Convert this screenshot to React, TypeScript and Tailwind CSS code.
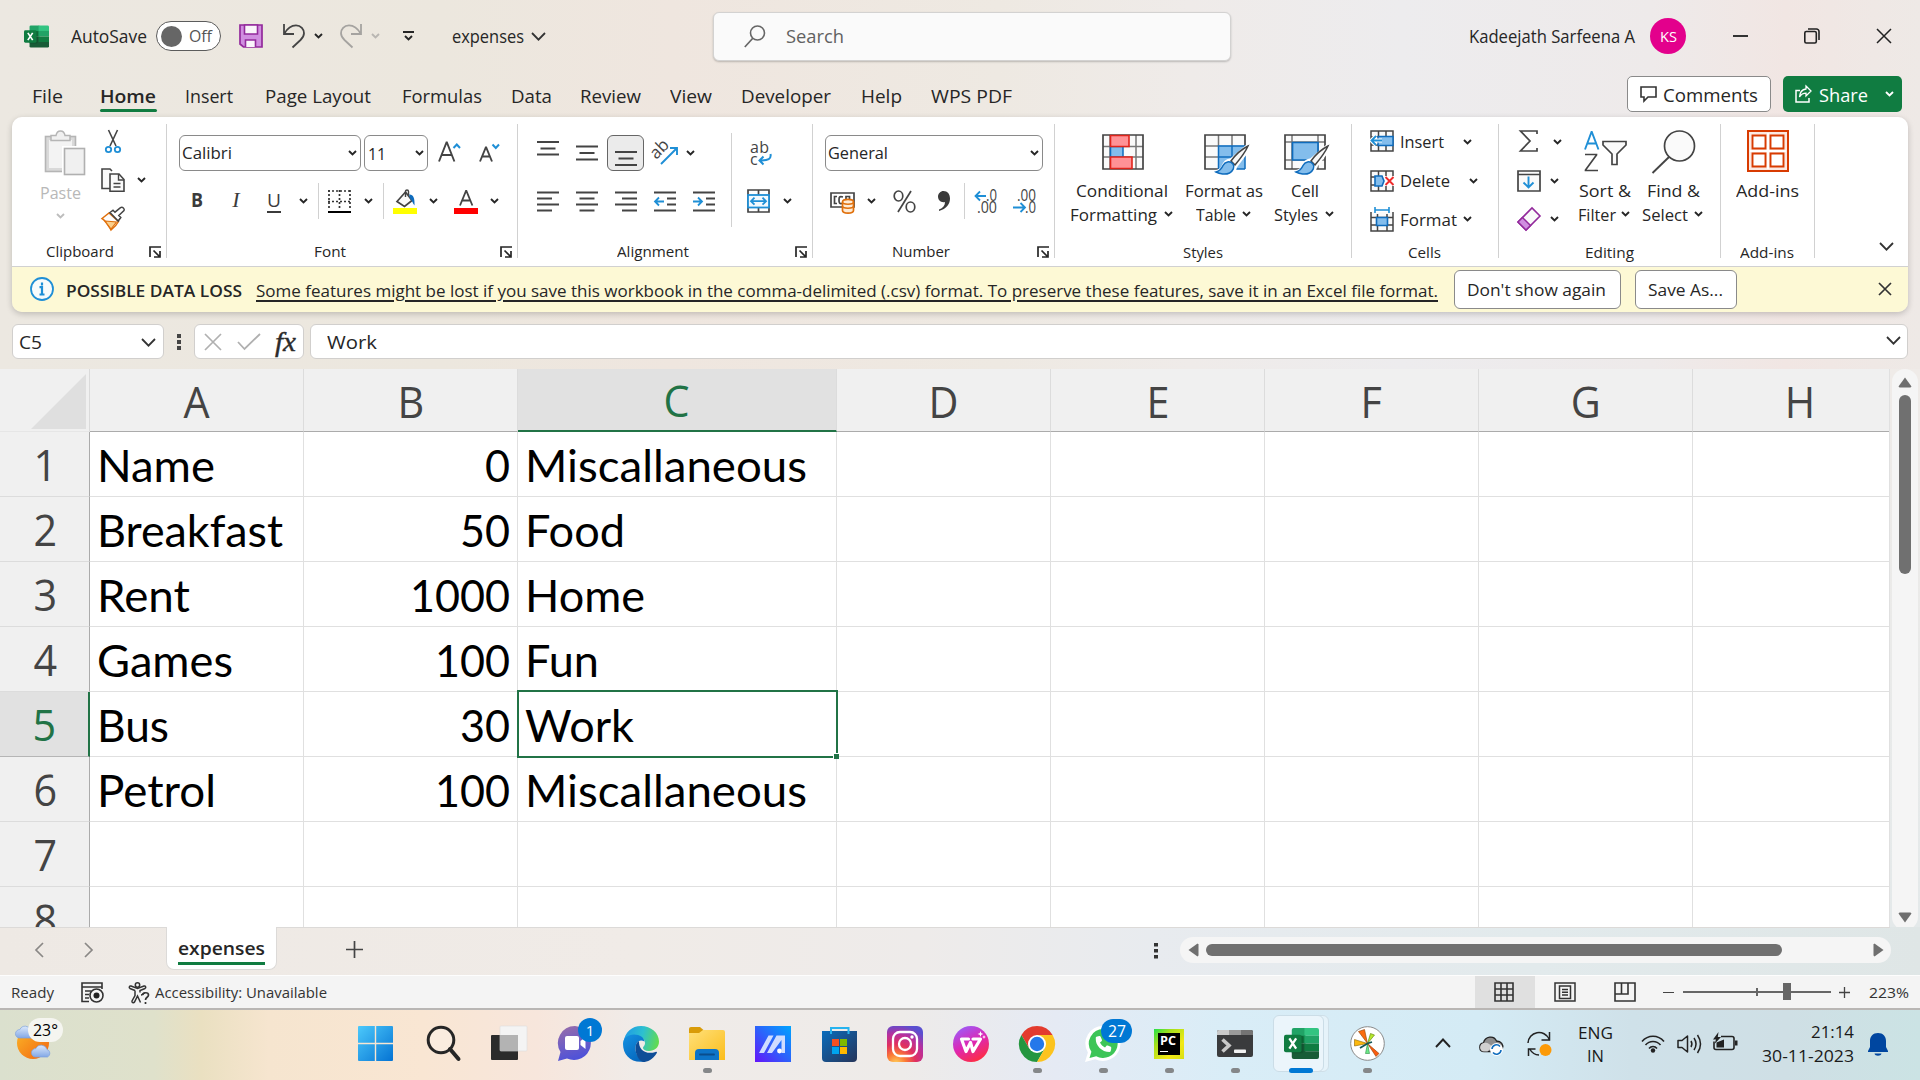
import { useLayoutEffect, useRef, useState, type ReactNode } from "react";
import { FaPhone } from "react-icons/fa6";

/** One line of text whose glyphs are condensed or widened to fill the box width. */
function Fit({ className = "", children }: { className?: string; children: ReactNode }) {
  const outer = useRef<HTMLSpanElement>(null);
  const inner = useRef<HTMLSpanElement>(null);
  const [scale, setScale] = useState(1);
  useLayoutEffect(() => {
    if (outer.current && inner.current && inner.current.offsetWidth > 0) {
      setScale(outer.current.clientWidth / inner.current.getBoundingClientRect().width);
    }
  }, []);
  return (
    <span ref={outer} className={"block shrink-0 whitespace-nowrap " + className}>
      <span ref={inner} className="inline-block origin-left" style={{ transform: `scaleX(${scale})` }}>
        {children}
      </span>
    </span>
  );
}

function Ic({ w, h, className = "", children }: { w: number; h: number; className?: string; children: ReactNode }) {
  return (
    <svg width={w} height={h} viewBox={`0 0 ${w} ${h}`} fill="none" className={"block shrink-0 overflow-visible " + className}>
      {children}
    </svg>
  );
}

function Chev({ className = "", color = "#262626" }: { className?: string; color?: string }) {
  return (
    <Ic w={9} h={6} className={className}>
      <path d="M1 1l3.5 3.5L8 1" stroke={color} strokeWidth="1.9" />
    </Ic>
  );
}

function BigChev({ className = "" }: { className?: string }) {
  return (
    <Ic w={15} h={9} className={className}>
      <path d="M1 1l6.5 6.7L14 1" stroke="#333" strokeWidth="1.8" />
    </Ic>
  );
}

function Launcher({ className = "" }: { className?: string }) {
  return (
    <Ic w={12} h={12} className={className}>
      <path d="M1 11V1h11M4.5 4.5l6 6M11 5v6H5" stroke="#262626" strokeWidth="1.7" />
    </Ic>
  );
}

const Divider = () => <div className="mt-[7px] h-[134px] w-px shrink-0 bg-[#d1d1d1]" />;

function ExcelLogo({ size }: { size: number }) {
  return (
    <svg width={size} height={size} viewBox="0 0 36 36" className="block shrink-0">
      <path d="M10 2h12v10H8V4a2 2 0 0 1 2-2z" fill="#21a366" />
      <path d="M21 2h13a2 2 0 0 1 2 2v6H21z" fill="#33c481" />
      <path d="M8 10h14v8H8z" fill="#107c41" />
      <path d="M21 10h15v8H21z" fill="#21a366" />
      <path d="M8 18h14v9H8z" fill="#185c37" />
      <path d="M21 18h15v8H21z" fill="#107c41" />
      <path d="M8 26h28v6a2 2 0 0 1-2 2H10a2 2 0 0 1-2-2z" fill="#185c37" />
      <path d="M8 10h10a2 2 0 0 1 2 2v14a2 2 0 0 1-2 2H8z" fill="#0b4a28" opacity=".45" />
      <rect x="0" y="9" width="18" height="18" rx="2" fill="#107c41" />
      <path d="M5.5 12.8l7 10.4M12.5 12.8l-7 10.4" stroke="#fff" strokeWidth="2.4" />
    </svg>
  );
}

function TitleBar() {
  return (
    <div className="flex h-[72px] items-center">
      <div className="ml-6">
        <ExcelLogo size={25} />
      </div>
      <Fit className="ml-[22px] w-[76px] text-[18px]">AutoSave</Fit>
      <div className="ml-[9px] flex h-[30px] w-[65px] shrink-0 items-center rounded-full border border-[#5c5c5c] bg-white">
        <div className="ml-1 size-[21px] shrink-0 rounded-full bg-[#666]" />
        <Fit className="ml-[7px] w-[23px] text-[16px] text-[#555]">Off</Fit>
      </div>
      <Ic w={24} h={24} className="ml-[18px]">
        <path d="M1 1h22v22H4.5L1 20z" fill="#d08ee0" stroke="#932a9c" strokeWidth="1.7" />
        <path d="M5.5 1h13v9h-13zM6.5 23v-7h10v7" fill="#faf5fb" stroke="#932a9c" strokeWidth="1.6" />
      </Ic>
      <Ic w={22} h={24} className="ml-5">
        <path d="M1 0v10h10M1.5 9.5C4 5 8 1.4 13 1.4c5 0 8 3.800 8 7.800 0 3-1.500 4.800-3.500 6.800L9.500 23.500" stroke="#444" strokeWidth="1.800" />
      </Ic>
      <Chev className="ml-[9px]" />
      <Ic w={22} h={24} className="ml-[17px]">
        <path d="M21 0v10H11M20.500 9.500C18 5 14 1.400 9 1.400c-5 0-8 3.800-8 7.800 0 3 1.500 4.800 3.500 6.800l8 7.500" stroke="#a5a3a0" strokeWidth="1.800" />
      </Ic>
      <Chev className="ml-[9px]" color="#b9b6b2" />
      <Ic w={11} h={10} className="ml-[23px]">
        <path d="M0 1h11M2 5l3.500 3.500L9 5" stroke="#262626" strokeWidth="1.900" />
      </Ic>
      <Fit className="ml-[38px] w-[72px] text-[18px]">expenses</Fit>
      <BigChev className="ml-[7px]" />
      <div className="ml-[167px] flex h-[49px] w-[518px] shrink-0 items-center rounded-[6px] border border-[#d3d2d1] bg-[#fafafa] shadow-[0_1px_2px_rgba(0,0,0,0.22)]">
        <Ic w={22} h={23} className="ml-[30px]">
          <circle cx="13.500" cy="8" r="7" stroke="#666" strokeWidth="1.600" />
          <path d="M8.800 13.200L0.800 22" stroke="#666" strokeWidth="1.700" />
        </Ic>
        <Fit className="ml-[20px] w-[58px] text-[19px] text-[#616161]">Search</Fit>
      </div>
      <Fit className="ml-[238px] w-[166px] text-[17.500px]">Kadeejath Sarfeena A</Fit>
      <div className="ml-[15px] flex size-[36px] shrink-0 items-center justify-center rounded-full bg-[#e3008c] text-white">
        <Fit className="w-[17px] text-[15px]">KS</Fit>
      </div>
      <div className="ml-[47px] h-[2px] w-[15px] bg-[#333]" />
      <Ic w={16} h={16} className="ml-[56px]">
        <rect x="0.800" y="3.500" width="11.500" height="11.500" rx="1.500" stroke="#222" strokeWidth="1.600" />
        <path d="M4 1h8.500a2.500 2.500 0 0 1 2.500 2.500V12" stroke="#222" strokeWidth="1.600" />
      </Ic>
      <Ic w={16} h={16} className="ml-[56px]">
        <path d="M1 1l14 14M15 1L1 15" stroke="#222" strokeWidth="1.500" />
      </Ic>
    </div>
  );
}

function TabRow() {
  return (
    <div className="flex h-[45px] items-center pt-[3px] text-[18.500px]">
      <Fit className="ml-8 w-[31px]">File</Fit>
      <div className="relative ml-[37px] flex h-[45px] items-center">
        <Fit className="w-[56px] font-semibold">Home</Fit>
        <div className="absolute bottom-[7px] left-0 h-[3px] w-[57px] rounded-full bg-[#107c41]" />
      </div>
      <Fit className="ml-[29px] w-[48px]">Insert</Fit>
      <Fit className="ml-[32px] w-[106px]">Page Layout</Fit>
      <Fit className="ml-[31px] w-[80px]">Formulas</Fit>
      <Fit className="ml-[29px] w-[41px]">Data</Fit>
      <Fit className="ml-[28px] w-[61px]">Review</Fit>
      <Fit className="ml-[29px] w-[42px]">View</Fit>
      <Fit className="ml-[29px] w-[90px]">Developer</Fit>
      <Fit className="ml-[30px] w-[41px]">Help</Fit>
      <Fit className="ml-[29px] w-[81px]">WPS PDF</Fit>
      <div className="ml-[615px] mt-[-4px] flex h-[36px] w-[144px] shrink-0 items-center rounded-[5px] border border-[#8a8a8a] bg-white">
        <Ic w={17} h={16} className="ml-[12px]">
          <path d="M1 1h15v10H8l-4 4v-4H1z" stroke="#333" strokeWidth="1.600" />
        </Ic>
        <Fit className="ml-[6px] mt-px w-[95px]">Comments</Fit>
      </div>
      <div className="ml-[12px] mt-[-4px] flex h-[36px] w-[119px] shrink-0 items-center rounded-[5px] bg-[#107c41] text-white">
        <Ic w={17} h={18} className="ml-[12px]">
          <path d="M5 5.500H1V17h13v-4" stroke="#fff" strokeWidth="1.500" />
          <path d="M11 1l5 5-5 5V8.200C8 8.200 6 9.500 4.500 12c.3-4.500 2.500-7.500 6.500-8z" stroke="#fff" strokeWidth="1.300" />
        </Ic>
        <Fit className="ml-[7px] mt-px w-[49px]">Share</Fit>
        <Chev className="ml-[17px]" color="#fff" />
      </div>
    </div>
  );
}

function ClipboardGroup() {
  return (
    <div className="w-[154px] shrink-0">
      <div className="flex h-[117px]">
        <div className="ml-[23px] flex w-[50px] flex-col items-center pt-[13px]">
          <Ic w={41} h={45} className="ml-[8px]">
            <rect x="1.500" y="6.500" width="30" height="35" fill="#d9d9d9" stroke="#b5b5b5" strokeWidth="1.600" />
            <rect x="5" y="10" width="23" height="28" fill="#f3f3f3" />
            <path d="M7 10.500V5.500h5C12.500 2.500 14 1 16.500 1s4 1.500 4.500 4.500h5v5z" fill="#f0f0f0" stroke="#b5b5b5" strokeWidth="1.500" />
            <rect x="18" y="16" width="24" height="29" fill="#fff" />
            <rect x="20.500" y="18.500" width="20" height="26" fill="#f0f0f0" stroke="#b0b0b0" strokeWidth="1.600" />
          </Ic>
          <Fit className="mt-[8px] h-5 w-[41px] text-[16.500px] leading-5 text-[#b8b8b8]">Paste</Fit>
          <Chev className="mt-[10px]" color="#bdbdbd" />
        </div>
        <div className="ml-[16px] flex flex-col gap-[15px] pt-[12px]">
          <Ic w={24} h={24}>
            <path d="M7.500 1l7.500 16M16.500 1L9 17" stroke="#444" strokeWidth="1.600" />
            <circle cx="7.500" cy="20.500" r="2.700" stroke="#1f8fd6" strokeWidth="1.800" />
            <circle cx="16.500" cy="20.500" r="2.700" stroke="#1f8fd6" strokeWidth="1.800" />
          </Ic>
          <div className="flex items-center">
            <Ic w={24} h={24}>
              <path d="M9 20.500H1V1h8l2 2" stroke="#444" strokeWidth="1.600" fill="#fafafa" />
              <path d="M9 6h9l5 5.500V23.200H9z" fill="#fafafa" stroke="#444" strokeWidth="1.600" />
              <path d="M17.500 6v6H23M12.500 15.500h7M12.500 19h7" stroke="#444" strokeWidth="1.400" />
            </Ic>
            <Chev className="ml-[12px]" />
          </div>
          <Ic w={24} h={24}>
            <path d="M1 11.500L8 6l9.500 8.500c-2 4-4.500 6-7.500 8.500C7 18 5 14 1 11.500z" fill="#fdfdfd" stroke="#e0700c" strokeWidth="1.500" />
            <path d="M4 14l11.500 1-5.500 7z" fill="#fbd08d" stroke="#e0700c" strokeWidth="1.100" />
            <path d="M9 5.500l3-2.300 2 2 5.500-4.500c2-1.200 4.500 1 3.500 2.900l-5.200 4.900 2 2-2.600 3.500z" fill="#fff" stroke="#444" strokeWidth="1.500" />
          </Ic>
        </div>
      </div>
      <div className="flex h-[35px] items-center">
        <Fit className="ml-[34px] w-[68px] text-[15px]">Clipboard</Fit>
        <Launcher className="ml-[35px]" />
      </div>
    </div>
  );
}

function FontGroup() {
  return (
    <div className="w-[350px] shrink-0">
      <div className="h-[117px] pt-[18px]">
        <div className="flex h-[36px] items-center">
          <div className="ml-[12px] flex h-[36px] w-[182px] items-center rounded-[6px] border border-[#8a8a8a]">
            <Fit className="ml-[2px] mt-px w-[50px] text-[16.500px]">Calibri</Fit>
            <Chev className="ml-[116px]" />
          </div>
          <div className="ml-[3px] flex h-[36px] w-[64px] items-center rounded-[6px] border border-[#8a8a8a]">
            <Fit className="ml-[3px] mt-px w-[18px] text-[17px]">11</Fit>
            <Chev className="ml-[29px]" />
          </div>
          <Ic w={23} h={24} className="-mt-[3px] ml-[10px]">
            <path d="M1 21.500L8.500 2.500h.4l7.500 19M3.800 15h9.800" stroke="#444" strokeWidth="1.900" />
            <path d="M15.500 8l3.300-3.500L22 8" stroke="#1f8fd6" strokeWidth="2" />
          </Ic>
          <Ic w={21} h={24} className="-mt-[3px] ml-[18px]">
            <path d="M1 21.500L6.800 7.500h.4l5.800 14M3.200 16.500h7.600" stroke="#444" strokeWidth="1.900" />
            <path d="M13.500 4.500l3.300 3.500L20 4.500" stroke="#1f8fd6" strokeWidth="2" />
          </Ic>
        </div>
        <div className="mt-[12px] flex h-[36px] items-center text-[#3b3b3b]">
          <Fit className="-mt-px ml-[24px] w-[12px] text-[19px] font-bold">B</Fit>
          <span className="-mt-[3px] ml-[26px] w-[14px] shrink-0 text-center font-['Liberation_Serif'] text-[22px] italic">I</span>
          <div className="ml-[24px] flex w-[14px] flex-col items-center">
            <Fit className="h-[22px] w-[14px] text-[18px] leading-[22px]">U</Fit>
            <div className="h-[2px] w-[14px] bg-[#3b3b3b]" />
          </div>
          <Chev className="ml-[18px]" />
          <div className="ml-[10px] h-[36px] w-px bg-[#d1d1d1]" />
          <Ic w={23} h={23} className="ml-[9px]">
            <path d="M0 1h23M0 11.500h23" stroke="#333" strokeWidth="1.700" strokeDasharray="2 2" />
            <path d="M1 0v20M11.500 0v20M22 0v20" stroke="#333" strokeWidth="1.700" strokeDasharray="2 2" />
            <path d="M0 22h23" stroke="#000" strokeWidth="2" />
          </Ic>
          <Chev className="ml-[13px]" />
          <div className="ml-[10px] h-[36px] w-px bg-[#d1d1d1]" />
          <Ic w={24} h={25} className="ml-[9px]">
            <path d="M4 12.500L12.500 3l6.500 8.500-7.500 6z" stroke="#444" strokeWidth="1.700" fill="#fafafa" />
            <path d="M12.500 8V2.500c0-2 3-2 3 0V6" stroke="#444" strokeWidth="1.400" />
            <path d="M16 5.500c4-.5 6 3 5.500 11-2-2-2-5-4.500-7z" fill="#0f6cbd" />
            <path d="M0 19h24v6H0z" fill="#ff0" />
          </Ic>
          <Chev className="ml-[12px]" />
          <Ic w={24} h={25} className="ml-[16px]">
            <path d="M6 16.500L12 2h.4l6 14.500M8 11.500h8.200" stroke="#444" strokeWidth="1.800" />
            <path d="M0 19h24v6H0z" fill="#f00" />
          </Ic>
          <Chev className="ml-[12px]" />
        </div>
      </div>
      <div className="flex h-[35px] items-center">
        <Fit className="ml-[147px] w-[32px] text-[15px]">Font</Fit>
        <Launcher className="ml-[154px]" />
      </div>
    </div>
  );
}

function Lines({ d, className = "" }: { d: string; className?: string }) {
  return (
    <Ic w={22} h={21} className={className}>
      <path d={d} stroke="#444" strokeWidth="1.800" />
    </Ic>
  );
}

function AlignmentGroup() {
  return (
    <div className="w-[294px] shrink-0">
      <div className="flex h-[117px]">
        <div className="w-[213px] pt-[18px]">
          <div className="flex h-[36px] items-center">
            <Lines className="ml-[19px]" d="M0 -1h22M3.500 5.500h15M0 11.500h22" />
            <Lines className="ml-[17px]" d="M0 3.500h22M3.500 10h15M0 16.500h22" />
            <div className="ml-[9px] flex h-[36px] w-[37px] items-center justify-center rounded-[6px] border border-[#666] bg-[#ebebeb]">
              <Lines d="M0 9h22M3.500 15.500h15M0 22h22" />
            </div>
            <Ic w={25} h={25} className="-mt-px ml-[9px]">
              <text x="-3" y="15" transform="rotate(-45 6 10)" fontSize="17" fill="#444">ab</text>
              <path d="M8 24L24 8M17 8h7v7" stroke="#1f8fd6" strokeWidth="1.900" />
            </Ic>
            <Chev className="ml-[8px]" />
          </div>
          <div className="mt-[12px] flex h-[36px] items-center gap-[17px] pl-[19px]">
            <Lines d="M0 1.500h22M0 7.500h15M0 13.500h22M0 19.500h15" />
            <Lines d="M0 1.500h22M3.500 7.500h15M0 13.500h22M3.500 19.500h15" />
            <Lines d="M0 1.500h22M7 7.500h15M0 13.500h22M7 19.500h15" />
            <Ic w={22} h={21}>
              <path d="M0 1.500h22M13 7.500h9M13 13.500h9M0 19.500h22" stroke="#444" strokeWidth="1.800" />
              <path d="M10 10.500H1.500M5 6.500l-4 4 4 4" stroke="#1f8fd6" strokeWidth="1.800" />
            </Ic>
            <Ic w={22} h={21}>
              <path d="M0 1.500h22M13 7.500h9M13 13.500h9M0 19.500h22" stroke="#444" strokeWidth="1.800" />
              <path d="M0 10.500h8.500M5 6.500l4 4-4 4" stroke="#1f8fd6" strokeWidth="1.800" />
            </Ic>
          </div>
        </div>
        <div className="mt-[16px] h-[94px] w-px bg-[#d1d1d1]" />
        <div className="pt-[18px]">
          <div className="flex h-[36px] items-center">
            <Ic w={22} h={25} className="ml-[18px]">
              <text x="0" y="12" fontSize="16" fill="#444" textLength="19">ab</text>
              <text x="0" y="24" fontSize="16" fill="#444">c</text>
              <path d="M20.500 13c1 5-2 6.500-11 6.500M13.500 15.500l-4 4 4 4" stroke="#1f8fd6" strokeWidth="2" />
            </Ic>
          </div>
          <div className="mt-[12px] flex h-[36px] items-center">
            <Ic w={23} h={24} className="ml-[15px]">
              <path d="M1 1h21v22H1zM11.500 1v5M11.500 18v5" stroke="#444" strokeWidth="1.700" />
              <rect x="1" y="6" width="21" height="12.500" fill="#f2f9fe" stroke="#1f8fd6" strokeWidth="1.800" />
              <path d="M4 12.200h15M7.500 8.700L4 12.200l3.500 3.500M15.500 8.700l3.500 3.500-3.500 3.500" stroke="#1f8fd6" strokeWidth="1.800" />
            </Ic>
            <Chev className="ml-[13px]" />
          </div>
        </div>
      </div>
      <div className="flex h-[35px] items-center">
        <Fit className="ml-[99px] w-[72px] text-[15px]">Alignment</Fit>
        <Launcher className="ml-[106px]" />
      </div>
    </div>
  );
}

function NumberGroup() {
  return (
    <div className="w-[241px] shrink-0">
      <div className="h-[117px] pt-[18px]">
        <div className="ml-[12px] flex h-[36px] w-[218px] items-center rounded-[6px] border border-[#8a8a8a]">
          <Fit className="ml-[2px] mt-px w-[60px] text-[16.500px]">General</Fit>
          <Chev className="ml-[142px]" />
        </div>
        <div className="mt-[12px] flex h-[36px] items-center">
          <Ic w={25} h={22} className="ml-[17px] mt-[3px]">
            <path d="M1 1h23v14H1z" stroke="#444" strokeWidth="1.700" />
            <path d="M7 4.500H4.500v7H7M13 5c-3.500-1-4 0-4 3s.5 4 3 3.500M19.500 7V4.500H16V8" stroke="#444" strokeWidth="1.700" />
            <path d="M12.500 10c0-3.500 11-3.500 11 0v8.500c0 3.500-11 3.500-11 0z" fill="#fdebd6" stroke="#e0700c" strokeWidth="1.700" />
            <path d="M12.500 10c0 3 11 3 11 0M12.500 14c0 3 11 3 11 0" stroke="#e0700c" strokeWidth="1.600" />
          </Ic>
          <Chev className="ml-[12px]" />
          <Ic w={23} h={23} className="ml-[17px]">
            <path d="M18 1L5 22" stroke="#444" strokeWidth="1.700" />
            <ellipse cx="5.500" cy="6" rx="4.300" ry="5" stroke="#444" strokeWidth="1.700" />
            <ellipse cx="17.500" cy="17" rx="4.300" ry="5" stroke="#444" strokeWidth="1.700" />
          </Ic>
          <Ic w={12} h={20} className="ml-[22px]">
            <path d="M5.500 0C9.500 0 12 3 12 7.500 12 13 8.500 18 1 20v-1.500c4-1.500 6-4 6-7.500-4 1-7-2-7-5.500C0 2.500 2.500 0 5.500 0z" fill="#3b3b3b" />
          </Ic>
          <div className="ml-[14px] h-[36px] w-px bg-[#d1d1d1]" />
          <Ic w={23} h={24} className="-mt-px ml-[9px]">
            <text x="12" y="11.500" fontSize="15.500" fill="#444" textLength="11" lengthAdjust="spacingAndGlyphs">.0</text>
            <text x="3" y="23.500" fontSize="15.500" fill="#444" textLength="20" lengthAdjust="spacingAndGlyphs">.00</text>
            <path d="M12 7H1.500M6 2.500L1.500 7 6 11.500" stroke="#1f8fd6" strokeWidth="1.800" />
          </Ic>
          <Ic w={23} h={24} className="-mt-px ml-[16px]">
            <text x="4" y="11.500" fontSize="15.500" fill="#444" textLength="19" lengthAdjust="spacingAndGlyphs">.00</text>
            <text x="12" y="23.500" fontSize="15.500" fill="#444" textLength="11" lengthAdjust="spacingAndGlyphs">.0</text>
            <path d="M0 18.500h11.500M7.500 14l4.500 4.500L7.500 23" stroke="#1f8fd6" strokeWidth="1.800" />
          </Ic>
        </div>
      </div>
      <div className="flex h-[35px] items-center">
        <Fit className="ml-[79px] w-[58px] text-[15px]">Number</Fit>
        <Launcher className="ml-[87px]" />
      </div>
    </div>
  );
}

function Brush() {
  return (
    <g>
      <path d="M44 11.500L27 26c-5 1-6 2-8 7-1 3-4 4-7 5 8 4.500 18 2.500 19.500-5.500L46 13z" fill="#fff" stroke="#fff" strokeWidth="3.500" />
      <path d="M44 12c-6 3-12 8-17 15l4 4c5-6 10-12 13-19z" fill="#f7f7f7" stroke="#444" strokeWidth="1.500" />
      <path d="M12 38c4-1 5.500-3 7-6.500 2-4 7-5 10-1.500 2 3 0 7-3.500 9-4 2-10 1-13.500-1z" fill="#83bdec" stroke="#0f6cbd" strokeWidth="1.500" />
    </g>
  );
}

function StylesGroup() {
  return (
    <div className="w-[296px] shrink-0 text-[17px]">
      <div className="flex h-[117px] pt-[17px]">
        <div className="ml-[15px] w-[103px]">
          <Ic w={42} h={42} className="ml-[32px]">
            <path d="M1 1h40v34H1z" fill="#fafafa" />
            <path d="M8 1v34M34 1v34M1 12.500h40M1 23h40" stroke="#777" strokeWidth="1.500" />
            <path d="M1 1h40v34H1z" stroke="#444" strokeWidth="1.700" />
            <path d="M8.500 12.500H21V23H8.500z" fill="#83bdec" stroke="#0f6cbd" strokeWidth="1.500" />
            <path d="M8.500 1.500H27v11H8.500zM8.500 23H30v11.500H8.500z" fill="#ff9296" stroke="#e0241b" strokeWidth="1.600" />
          </Ic>
          <Fit className="ml-[6px] mt-[3px] h-6 w-[92px] leading-6">Conditional</Fit>
          <div className="flex h-6 items-center">
            <Fit className="w-[87px] leading-6">Formatting</Fit>
            <Chev className="ml-[7px] mt-[-3px]" />
          </div>
        </div>
        <div className="ml-[12px] w-[80px]">
          <Ic w={45} h={42} className="ml-[19px]">
            <path d="M1 1h40v34H1z" fill="#fafafa" />
            <path d="M14.500 11.500H41V35H14.500z" fill="#83bdec" />
            <path d="M1 12h13.500M1 23h13.500M14.500 1v11M28 1v11" stroke="#777" strokeWidth="1.500" />
            <path d="M41 12V1H1v34h13" stroke="#444" strokeWidth="1.700" />
            <path d="M14.500 35V12H41v23M28 12v23M14.500 23H41M28 35h13" stroke="#0f6cbd" strokeWidth="1.500" />
            <Brush />
          </Ic>
          <Fit className="mt-[3px] h-6 w-[78px] leading-6">Format as</Fit>
          <div className="flex h-6 items-center">
            <Fit className="ml-[11px] w-[40px] leading-6">Table</Fit>
            <Chev className="ml-[6px] mt-[-3px]" />
          </div>
        </div>
        <div className="ml-[9px] w-[62px]">
          <Ic w={45} h={42} className="ml-[10px]">
            <path d="M1 1h40v34H1z" fill="#fafafa" />
            <path d="M8 1v34M34 1v34M1 8h40M1 26h40" stroke="#777" strokeWidth="1.500" />
            <path d="M1 1h40v34H1z" stroke="#444" strokeWidth="1.700" />
            <path d="M8.500 8.500H34V26H8.500z" fill="#83bdec" stroke="#0f6cbd" strokeWidth="1.700" />
            <Brush />
          </Ic>
          <Fit className="ml-[17px] mt-[3px] h-6 w-[28px] leading-6">Cell</Fit>
          <div className="flex h-6 items-center">
            <Fit className="w-[44px] leading-6">Styles</Fit>
            <Chev className="ml-[7px] mt-[-3px]" />
          </div>
        </div>
      </div>
      <div className="flex h-[36px] items-center">
        <Fit className="ml-[128px] w-[40px] text-[15px]">Styles</Fit>
      </div>
    </div>
  );
}

function CellsGroup() {
  return (
    <div className="w-[146px] shrink-0 text-[16.500px]">
      <div className="h-[117px] pl-[18px] pt-[5px]">
        <div className="flex h-[39px] items-center">
          <Ic w={24} h={22} className="-mt-px">
            <path d="M1 1h22v20H1zM1 7h22M1 15h22M8.500 1v20M16 1v20" stroke="#444" strokeWidth="1.500" fill="#fafafa" />
            <path d="M8 6.500h15v9H8z" fill="#83bdec" stroke="#0f6cbd" strokeWidth="1.500" />
            <path d="M12 10.500H1.500M6 6l-4.500 4.500L6 15" stroke="#fff" strokeWidth="4" />
            <path d="M12 10.500H1.500M6 6l-4.500 4.500L6 15" stroke="#1f8fd6" strokeWidth="1.800" />
          </Ic>
          <Fit className="ml-[6px] mt-px w-[44px]">Insert</Fit>
          <Chev className="ml-[19px]" />
        </div>
        <div className="flex h-[39px] items-center">
          <Ic w={24} h={22}>
            <path d="M1 1h22v20H1zM1 7h22M1 15h22M8.500 1v20M16 1v20" stroke="#444" strokeWidth="1.500" fill="#fafafa" />
            <path d="M13 6h11v10H13z" fill="#fff" />
            <path d="M5 6h7l2 5-2 5H5z" fill="#83bdec" stroke="#0f6cbd" strokeWidth="1.600" />
            <path d="M15.500 7l8 8M23.500 7l-8 8" stroke="#ee2c2c" strokeWidth="1.900" />
          </Ic>
          <Fit className="ml-[6px] mt-px w-[50px]">Delete</Fit>
          <Chev className="ml-[19px]" />
        </div>
        <div className="flex h-[39px] items-center">
          <Ic w={24} h={24}>
            <path d="M1 4v19h22V4M1 9.500h22M1 17h22M7.500 6v17M17 6v17" stroke="#444" strokeWidth="1.500" fill="#fafafa" />
            <path d="M6.500 9.500h11v8h-11z" fill="#83bdec" stroke="#0f6cbd" strokeWidth="1.600" />
            <path d="M5 2h14M5 -1v6M19 -1v6" stroke="#1f8fd6" strokeWidth="1.600" />
          </Ic>
          <Fit className="ml-[6px] mt-px w-[57px]">Format</Fit>
          <Chev className="-mt-[2px] ml-[6px]" />
        </div>
      </div>
      <div className="flex h-[36px] items-center">
        <Fit className="ml-[56px] w-[33px] text-[15px]">Cells</Fit>
      </div>
    </div>
  );
}

function EditingGroup() {
  return (
    <div className="w-[221px] shrink-0 text-[17px]">
      <div className="flex h-[117px]">
        <div className="ml-[18px] w-[47px] pt-[5px]">
          <div className="flex h-[39px] items-center">
            <Ic w={19} h={22} className="-mt-px ml-[2px]">
              <path d="M18 4V1H1.500l9.500 10-9.500 10H18v-3" stroke="#444" strokeWidth="1.700" />
            </Ic>
            <Chev className="ml-[15px]" />
          </div>
          <div className="flex h-[39px] items-center">
            <Ic w={24} h={22}>
              <path d="M1 1h22v20H1zM1 4.500h22" stroke="#444" strokeWidth="1.700" fill="#fafafa" />
              <path d="M11.500 6.500v11M6.500 12.500l5 5 5-5" stroke="#1f8fd6" strokeWidth="1.900" />
            </Ic>
            <Chev className="ml-[9px]" />
          </div>
          <div className="flex h-[38px] items-center">
            <Ic w={24} h={24}>
              <path d="M1 15L15 1l8 8L9 23z" fill="#fafafa" stroke="#932a9c" strokeWidth="1.600" />
              <path d="M1 15l4.500-4.500 8 8L9 23z" fill="#d08ee0" stroke="#932a9c" strokeWidth="1.500" />
            </Ic>
            <Chev className="ml-[9px]" />
          </div>
        </div>
        <div className="ml-[13px] w-[55px] pt-[13px]">
          <Ic w={43} h={42} className="ml-[7px]">
            <path d="M1 19.500L7.500 2h.3l6.700 17.500M3.500 13.500H12" stroke="#1f8fd6" strokeWidth="1.900" />
            <path d="M1 24.500h11.500v.5L1.500 40v.5H14" stroke="#444" strokeWidth="1.700" />
            <path d="M19 11.500h23v3.500l-9 9v10.500h-5V24l-9-9z" stroke="#444" strokeWidth="1.700" fill="#fafafa" />
          </Ic>
          <Fit className="ml-[2px] mt-[7px] h-6 w-[52px] leading-6">Sort &amp;</Fit>
          <div className="flex h-6 items-center">
            <Fit className="ml-px w-[38px] leading-6">Filter</Fit>
            <Chev className="ml-[5px] mt-[-3px]" />
          </div>
        </div>
        <div className="ml-[9px] w-[62px] pt-[13px]">
          <Ic w={46} h={44} className="ml-[9px]">
            <circle cx="29.500" cy="16" r="15" stroke="#444" strokeWidth="1.700" fill="#fafafa" />
            <path d="M19 27L2.500 43" stroke="#444" strokeWidth="1.900" />
          </Ic>
          <Fit className="ml-[6px] mt-[5px] h-6 w-[53px] leading-6">Find &amp;</Fit>
          <div className="flex h-6 items-center">
            <Fit className="ml-px w-[46px] leading-6">Select</Fit>
            <Chev className="ml-[6px] mt-[-3px]" />
          </div>
        </div>
      </div>
      <div className="flex h-[36px] items-center">
        <Fit className="ml-[86px] w-[49px] text-[15px]">Editing</Fit>
      </div>
    </div>
  );
}

function Ribbon() {
  return (
    <div className="flex h-[149px] rounded-t-[10px] bg-white">
      <ClipboardGroup />
      <Divider />
      <FontGroup />
      <Divider />
      <AlignmentGroup />
      <Divider />
      <NumberGroup />
      <Divider />
      <StylesGroup />
      <Divider />
      <CellsGroup />
      <Divider />
      <EditingGroup />
      <Divider />
      <div className="flex w-[93px] shrink-0 flex-col items-center">
        <div className="h-[117px] shrink-0 pt-[13px]">
          <Ic w={42} h={42} className="ml-[11px]">
            <rect x="1" y="1" width="40" height="40" fill="#fbe9e2" stroke="#d83b01" strokeWidth="2" />
            <path d="M3 21h36M21 3v36" stroke="#fff" strokeWidth="2" />
            <path d="M5.500 5.500h13v13h-13zM23.500 5.500h13v13h-13zM5.500 23.500h13v13h-13zM23.500 23.500h13v13h-13z" fill="#fff" stroke="#d83b01" strokeWidth="1.900" />
          </Ic>
          <Fit className="mt-[7px] h-6 w-[63px] text-[17px] leading-6">Add-ins</Fit>
        </div>
        <div className="flex h-[36px] shrink-0 items-center">
          <Fit className="-ml-px w-[54px] text-[15px]">Add-ins</Fit>
        </div>
      </div>
      <Divider />
      <BigChev className="ml-[64px] mt-[125px]" />
    </div>
  );
}

function MessageBar() {
  return (
    <div className="flex h-[46px] items-center rounded-b-[10px] border-t border-[#d1d1d1] bg-[#fdf9d5] text-[16.500px]">
      <Ic w={24} h={24} className="-mt-px ml-[18px]">
        <circle cx="12" cy="12" r="11" stroke="#1f8fd6" strokeWidth="1.800" fill="#f8fbfb" />
        <path d="M12 5.500v3M9.500 10.200H12v7M9.500 17.500h5" stroke="#1f8fd6" strokeWidth="2.200" />
      </Ic>
      <Fit className="ml-[12px] mt-[3px] w-[176px] font-semibold">POSSIBLE DATA LOSS</Fit>
      <Fit className="ml-[14px] mt-[3px] w-[1182px]">
        <span className="underline decoration-[1.5px] underline-offset-[3px]">
          Some features might be lost if you save this workbook in the comma-delimited (.csv) format. To preserve these
          features, save it in an Excel file format.
        </span>
      </Fit>
      <div className="ml-[16px] flex h-[39px] w-[167px] shrink-0 items-center justify-center rounded-[6px] border border-[#8a8a8a] bg-white">
        <Fit className="-ml-[2px] w-[139px] text-[17px]">Don't show again</Fit>
      </div>
      <div className="ml-[14px] flex h-[39px] w-[102px] shrink-0 items-center justify-center rounded-[6px] border border-[#8a8a8a] bg-white">
        <Fit className="-ml-[2px] w-[75px] text-[17px]">Save As...</Fit>
      </div>
      <Ic w={14} h={14} className="-mt-[2px] ml-[141px]">
        <path d="M1 1l12 12M13 1L1 13" stroke="#333" strokeWidth="1.700" />
      </Ic>
    </div>
  );
}

function FormulaBar() {
  return (
    <div className="mt-[12px] flex h-[35px] items-center px-3 text-[18px]">
      <div className="flex h-[35px] w-[152px] shrink-0 items-center rounded-[6px] border border-[#d1cfcd] bg-white">
        <Fit className="ml-[6px] mt-px w-[23px]">C5</Fit>
        <BigChev className="ml-[99px] mt-px" />
      </div>
      <Ic w={4} h={16} className="ml-[13px]">
        <path d="M0 0h4v4H0zM0 6h4v4H0zM0 12h4v4H0z" fill="#444" />
      </Ic>
      <div className="ml-[13px] flex h-[35px] w-[110px] shrink-0 items-center rounded-[6px] border border-[#d1cfcd] bg-white">
        <Ic w={18} h={18} className="ml-[9px]">
          <path d="M1 1l16 16M17 1L1 17" stroke="#b0b0b0" strokeWidth="1.700" />
        </Ic>
        <Ic w={24} h={17} className="ml-[15px]">
          <path d="M1 9l6.500 7L23 1" stroke="#b0b0b0" strokeWidth="1.800" />
        </Ic>
        <Fit className="ml-[14px] w-[21px] font-['Liberation_Serif'] text-[27px] italic leading-[30px] text-[#2b2b2b] [-webkit-text-stroke:0.4px_#2b2b2b]">fx</Fit>
      </div>
      <div className="ml-[6px] flex h-[35px] w-[1598px] shrink-0 items-center rounded-[6px] border border-[#d1cfcd] bg-white">
        <Fit className="ml-[16px] mt-px w-[50px]">Work</Fit>
        <BigChev className="ml-[1509px] mt-[-3px]" />
      </div>
    </div>
  );
}

type Cell = { text: string; w: string };
const rows: Cell[][] = [
  [{ text: "Name", w: "w-[118px]" }, { text: "0", w: "w-[25px]" }, { text: "Miscallaneous", w: "w-[282px]" }],
  [{ text: "Breakfast", w: "w-[186px]" }, { text: "50", w: "w-[50px]" }, { text: "Food", w: "w-[100px]" }],
  [{ text: "Rent", w: "w-[93px]" }, { text: "1000", w: "w-[100px]" }, { text: "Home", w: "w-[120px]" }],
  [{ text: "Games", w: "w-[136px]" }, { text: "100", w: "w-[75px]" }, { text: "Fun", w: "w-[74px]" }],
  [{ text: "Bus", w: "w-[72px]" }, { text: "30", w: "w-[50px]" }, { text: "Work", w: "w-[109px]" }],
  [{ text: "Petrol", w: "w-[119px]" }, { text: "100", w: "w-[75px]" }, { text: "Miscallaneous", w: "w-[282px]" }],
  [],
  [],
];
const letters = ["A", "B", "C", "D", "E", "F", "G", "H"];
const colWidths = ["w-[214px]", "w-[214px]", "w-[319px]", "w-[214px]", "w-[214px]", "w-[214px]", "w-[214px]", "w-[214px]"];

function Sheet() {
  return (
    <div className="w-[1890px] shrink-0 overflow-hidden border-r border-[#e0e0e0] bg-white">
      <div className="flex h-[63px] w-[2000px] bg-[#f0f0f0]">
        <div className="flex w-[90px] shrink-0 items-end justify-end border-b border-r border-b-[#e6e6e6] border-r-[#dadada] pb-[2px] pr-[3px]">
          <svg width="55" height="55" viewBox="0 0 55 55">
            <path d="M55 0v55H0z" fill="#dfdfdf" />
          </svg>
        </div>
        {letters.map((l, i) => (
          <div
            key={l}
            className={
              "flex shrink-0 items-center justify-center border-r border-r-[#dcdcdc] pt-[3px] text-[43px] leading-[50px] " +
              colWidths[i] +
              (i === 2 ? " border-b-2 border-b-[#217346] bg-[#e1e1e1] text-[#217346]" : " border-b border-b-[#ababab] text-[#444]")
            }
          >
            <span className="origin-center scale-x-[0.96]">{l}</span>
          </div>
        ))}
      </div>
      {rows.map((cells, r) => (
        <div key={r} className="flex h-[65px] w-[2000px]">
          <div
            className={
              "flex w-[90px] shrink-0 items-center justify-center border-b pl-px pt-px text-[43px] leading-[50px] " +
              (r === 4
                ? "border-b-[#b5b5b5] border-r-2 border-r-[#217346] bg-[#e1e1e1] text-[#217346]"
                : "border-b-[#dcdcdc] border-r border-r-[#ababab] bg-[#f0f0f0] text-[#444]")
            }
          >
            <span className="origin-center scale-x-[0.96]">{r + 1}</span>
          </div>
          {letters.map((l, c) => (
            <div
              key={l}
              className={
                "relative flex shrink-0 items-center border-b border-r border-[#e0e0e0] pt-px " +
                colWidths[c] +
                (c === 1 ? " justify-end pr-[7px]" : " pl-[7px]")
              }
            >
              {cells[c] && (
                <Fit className={"font-[Lato] text-[44px] leading-[56px] text-black " + cells[c].w}>{cells[c].text}</Fit>
              )}
              {r === 4 && c === 2 && (
                <div className="absolute -bottom-[2px] -left-[1px] -right-[2px] -top-[2px] z-10 border-2 border-[#217346]">
                  <div className="absolute -bottom-[3px] -right-[3px] size-[6px] border-l border-t border-white bg-[#217346]" />
                </div>
              )}
            </div>
          ))}
        </div>
      ))}
    </div>
  );
}

function VerticalScroll() {
  return (
    <div className="ml-[2px] flex h-[561px] w-[26px] shrink-0 flex-col items-center rounded-full bg-[#f5f5f5]">
      <Ic w={14} h={11} className="mt-[8px]">
        <path d="M7 0.500L13.500 9.500l-1 1h-11l-1-1z" fill="#6f6f6f" />
      </Ic>
      <div className="mt-[7px] h-[179px] w-[12px] rounded-full bg-[#707070]" />
      <Ic w={14} h={11} className="mt-[338px]">
        <path d="M7 10.500L13.500 1.500l-1-1h-11l-1 1z" fill="#6f6f6f" />
      </Ic>
    </div>
  );
}

function SheetTabs() {
  return (
    <div className="flex h-[48px] bg-[linear-gradient(90deg,#eee9e4_0%,#f0ebe7_33%,#eeebea_48%,#e8ebef_60%,#e2eaec_80%,#dfe6e6_100%)]">
      <div className="flex w-[1890px] shrink-0 border-t border-[#dcdad8]">
        <Ic w={9} h={16} className="ml-[35px] mt-[14px]">
          <path d="M8 1L1 8l7 7" stroke="#8a8886" strokeWidth="1.700" />
        </Ic>
        <Ic w={9} h={16} className="ml-[40px] mt-[14px]">
          <path d="M1 1l7 7-7 7" stroke="#8a8886" strokeWidth="1.700" />
        </Ic>
        <div className="-mt-px ml-[73px] flex h-[43px] w-[111px] shrink-0 flex-col items-center rounded-b-[8px] border border-t-0 border-[#dcdad8] bg-white">
          <Fit className="mt-[8px] h-[26px] w-[87px] text-[18.500px] font-semibold leading-[26px]">expenses</Fit>
          <div className="mt-px h-[3px] w-[87px] bg-[#107c41]" />
        </div>
        <div className="ml-[5px] mt-[9px] h-[28px] w-px bg-[#c8c6c4]" />
        <Ic w={17} h={17} className="ml-[64px] mt-[13px]">
          <path d="M8.500 0v17M0 8.500h17" stroke="#444" strokeWidth="1.700" />
        </Ic>
        <Ic w={4} h={16} className="ml-[791px] mt-[15px]">
          <path d="M0 0h4v3.500H0zM0 6h4v3.500H0zM0 12h4v3.500H0z" fill="#333" />
        </Ic>
        <div className="ml-[22px] mt-[9px] flex h-[26px] w-[711px] shrink-0 items-center rounded-full bg-[#f5f5f5]">
          <Ic w={11} h={14} className="ml-[8px]">
            <path d="M0.500 7L9.500 0.500l1 1v11l-1 1z" fill="#6f6f6f" />
          </Ic>
          <div className="ml-[7px] h-[12px] w-[576px] rounded-full bg-[#707070]" />
          <Ic w={11} h={14} className="ml-[91px]">
            <path d="M10.500 7L1.500 0.500l-1 1v11l1 1z" fill="#6f6f6f" />
          </Ic>
        </div>
      </div>
    </div>
  );
}

function StatusBar() {
  return (
    <div className="flex h-[35px] items-center border-b-2 border-t border-b-[#b9b6b4] border-t-[#fdfdfd] bg-[#f4f4f4] pt-px text-[14.500px] text-[#333]">
      <Fit className="ml-[11px] w-[43px]">Ready</Fit>
      <Ic w={23} h={21} className="ml-[27px]">
        <path d="M8 19.500H1V1h20v6M1 5h20M4 9h6M4 12.500h4M4 16h4" stroke="#333" strokeWidth="1.600" />
        <circle cx="15.500" cy="13.500" r="6.500" stroke="#333" strokeWidth="1.600" fill="#f4f4f4" />
        <circle cx="15.500" cy="13.500" r="3" fill="#222" />
      </Ic>
      <Ic w={21} h={22} className="ml-[24px]">
        <circle cx="9.500" cy="3" r="2.200" stroke="#333" strokeWidth="1.500" />
        <path d="M13 13c2 0 2-2 4-2M7 8.500L2 6.500c-1.500-1-.5-3 1-2.500l6.500 2.500L16 4c1.500-.5 2.500 1.500 1 2.500l-5 2v2M7 8.500v5L4 19c-.5 1.500 1.500 2.500 2.500 1L9.500 14l3 6.500" stroke="#333" strokeWidth="1.500" />
        <path d="M14.500 13c.5-3 6-3 6 0 0 2.500-3 2-3 5M17.500 20v2" stroke="#333" strokeWidth="1.700" />
      </Ic>
      <Fit className="ml-[6px] w-[172px]">Accessibility: Unavailable</Fit>
      <div className="-mt-px ml-[1148px] flex h-[32px] w-[60px] shrink-0 items-center justify-center bg-[#e0e0e0]">
        <Ic w={20} h={20} className="-ml-[2px] -mt-px">
          <path d="M1 1h18v18H1zM1 7h18M1 13h18M7 1v18M13 1v18" stroke="#333" strokeWidth="1.600" />
        </Ic>
      </div>
      <Ic w={22} h={20} className="-mt-[2px] ml-[19px]">
        <path d="M1 1h20v18H1zM5.500 4h11v12.500h-11zM8 7.500h6M8 10.200h6M8 13h6" stroke="#333" strokeWidth="1.500" />
      </Ic>
      <Ic w={22} h={20} className="-mt-[2px] ml-[38px]">
        <path d="M1 1h20v18H1zM1 12h13V1M7.500 1v11" stroke="#333" strokeWidth="1.600" />
      </Ic>
      <div className="ml-[27px] h-px w-[11px] bg-[#444]" />
      <Ic w={148} h={18} className="-mt-px ml-[9px]">
        <path d="M0 9h148" stroke="#666" strokeWidth="1.800" />
        <path d="M74 5v8" stroke="#666" strokeWidth="2" />
        <path d="M100 0h8v17h-8z" fill="#666" />
      </Ic>
      <Ic w={11} h={11} className="-mt-px ml-[8px]">
        <path d="M5.500 0v11M0 5.500h11" stroke="#444" strokeWidth="1.300" />
      </Ic>
      <Fit className="ml-[19px] w-[40px]">223%</Fit>
    </div>
  );
}

function Task({ children, running = false, active = false }: { children: ReactNode; running?: boolean; active?: boolean }) {
  return (
    <div className="relative flex h-[70px] w-[66px] shrink-0 items-center justify-center pb-[3px]">
      {active && (
        <>
          <div className="absolute left-[11px] top-[5px] h-[57px] w-[50px] rounded-[6px] border border-[#cfdfe8] bg-[#e6f3fa]" />
          <div className="absolute left-[5px] top-[5px] h-[57px] w-[51px] rounded-[6px] border border-[#cbdde7] bg-[#ebf5fb]" />
        </>
      )}
      <div className="relative">{children}</div>
      {running && <div className="absolute bottom-[7px] left-[29px] h-[5px] w-[9px] rounded-full bg-[#858789]" />}
      {active && <div className="absolute bottom-[7px] left-[21px] h-[5px] w-[24px] rounded-full bg-[#0078d4]" />}
    </div>
  );
}

function Cloud({ x, y }: { x: number; y: number }) {
  return (
    <path
      transform={`translate(${x} ${y})`}
      d="M4.500 13a4.200 4.200 0 0 1 .3-8.400A6 6 0 0 1 16 5.500 4 4 0 0 1 16.500 13z"
      fill="url(#cloud)"
      stroke="#7ea2dd"
      strokeWidth=".7"
    />
  );
}

function Taskbar() {
  return (
    <div className="flex h-[70px] bg-[linear-gradient(90deg,#dbe0ce_0%,#dfe1cb_8%,#eae0c1_10.500%,#f6e5cf_14%,#f9e6d3_22%,#f7e6dc_28%,#f0ebe8_33%,#eeebe9_47%,#e5eaf4_55%,#d9edf7_64%,#d4ebf5_77%,#cfe1e9_85%,#cfdfe5_93%,#cbe3e4_100%)]">
      <div className="relative w-[344px] shrink-0">
        <Ic w={38} h={40} className="ml-[15px] mt-[12px]">
          <defs>
            <linearGradient id="cloud" x1="0" y1="0" x2="0" y2="1">
              <stop stopColor="#dbe8fb" />
              <stop offset="1" stopColor="#83a8e6" />
            </linearGradient>
            <linearGradient id="sun" x1="0" y1="0" x2="1" y2="1">
              <stop stopColor="#fbb829" />
              <stop offset="1" stopColor="#f2640f" />
            </linearGradient>
          </defs>
          <circle cx="18" cy="21" r="16" fill="url(#sun)" />
          <Cloud x={0} y={3} />
          <Cloud x={16} y={22} />
        </Ic>
        <div className="absolute left-[28px] top-[8px] flex h-[24px] w-[35px] items-center justify-center rounded-full bg-[#f5f5f0]">
          <Fit className="w-[25px] text-[16px] text-black">23°</Fit>
        </div>
      </div>
      <Task>
        <Ic w={35} h={35} className="mr-[3px]">
          <defs>
            <linearGradient id="win" x1="0" y1="0" x2="1" y2="1" gradientUnits="objectBoundingBox">
              <stop stopColor="#4cc9fb" />
              <stop offset="1" stopColor="#0573d3" />
            </linearGradient>
          </defs>
          <path d="M0 1a1 1 0 0 1 1-1h15.800v16.800H0zM18.200 0H34a1 1 0 0 1 1 1v15.800H18.200zM0 18.200h16.800V35H1a1 1 0 0 1-1-1zM18.200 18.200H35V34a1 1 0 0 1-1 1H18.200z" fill="url(#win)" />
        </Ic>
      </Task>
      <Task>
        <Ic w={34} h={35} className="ml-px">
          <circle cx="14" cy="14" r="12.800" stroke="#262626" strokeWidth="3" fill="#fff" fillOpacity=".25" />
          <path d="M23 23l8.500 10" stroke="#262626" strokeWidth="4" strokeLinecap="round" />
        </Ic>
      </Task>
      <Task>
        <Ic w={36} h={35}>
          <rect x="0" y="9" width="27" height="25" rx="1" fill="#2b2b2b" />
          <rect x="9" y="0" width="27" height="25" rx="1" fill="#f4f4f4" stroke="#ddd" strokeWidth=".6" />
          <path d="M9 9h18v16H9z" fill="#b3b3b3" />
        </Ic>
      </Task>
      <Task>
        <Ic w={34} h={35}>
          <defs>
            <linearGradient id="chat" x1="0" y1="0" x2=".3" y2="1">
              <stop stopColor="#9a6da8" />
              <stop offset="1" stopColor="#4f52d8" />
            </linearGradient>
          </defs>
          <path d="M17 0a17 17 0 1 1-8 32.500L0 35l2.500-9A17 17 0 0 1 17 0z" fill="url(#chat)" />
          <rect x="7" y="10" width="14" height="14" rx="2" fill="#fff" />
          <path d="M22.500 15l5-4v12l-5-4z" fill="#fff" />
        </Ic>
        <div className="absolute -top-[8px] left-[20px] flex size-[24px] items-center justify-center rounded-full bg-[#0078d4] text-[15px] leading-none text-white">1</div>
      </Task>
      <Task>
        <Ic w={36} h={36}>
          <defs>
            <linearGradient id="edgeTop" x1="0" y1=".4" x2="1" y2=".6">
              <stop stopColor="#1f9be6" />
              <stop offset=".5" stopColor="#2dc0d0" />
              <stop offset="1" stopColor="#63dc4d" />
            </linearGradient>
            <linearGradient id="edgeLow" x1="0" y1="0" x2=".6" y2="1">
              <stop stopColor="#1592e2" />
              <stop offset="1" stopColor="#0669bf" />
            </linearGradient>
          </defs>
          <path d="M0.500 16C2 6 9 0 18 0c10 0 18 7 18 15.500 0 6-4.500 9.500-10 9.500-4 0-6-1.500-6-3s2-2 2-5c0-4-4-7-9-7C7 10 2 12 .5 16z" fill="url(#edgeTop)" />
          <path d="M0 18c0-6 5-9.500 11-9.500 6 0 10 3 10.500 7-6-3-9 2-9 7 0 6 4 11 9 13C8 37.500 0 29 0 18z" fill="url(#edgeLow)" />
          <path d="M12.500 22c0-3 1-5.500 3.500-7-.5 9 7 14 16.500 11 1.500-.5 2 .5 1 1.500C30 33.500 24.500 36 20 36c-4-1.500-7.500-7-7.500-14z" fill="#0f4d97" />
        </Ic>
      </Task>
      <Task running>
        <Ic w={36} h={34}>
          <defs>
            <linearGradient id="fold" x1="0" y1="0" x2="1" y2="1">
              <stop stopColor="#ffe07a" />
              <stop offset="1" stopColor="#fbbd1b" />
            </linearGradient>
          </defs>
          <path d="M0 2a2 2 0 0 1 2-2h9l4 3.500L10 8H0z" fill="#d99b08" />
          <path d="M0 6h10l4-3h20a2 2 0 0 1 2 2v28H0z" fill="url(#fold)" />
          <path d="M6 33v-7a4 4 0 0 1 4-4h16a4 4 0 0 1 4 4v7z" fill="#0d74c8" />
          <path d="M11 27.500h14" stroke="#0a4d8c" strokeWidth="1.800" strokeLinecap="round" />
        </Ic>
      </Task>
      <Task>
        <Ic w={36} h={36}>
          <defs>
            <linearGradient id="asus" x1="1" y1="0" x2="0" y2="1">
              <stop stopColor="#00a5ff" />
              <stop offset=".5" stopColor="#2c62fb" />
              <stop offset="1" stopColor="#6414fa" />
            </linearGradient>
          </defs>
          <path d="M0 0h36v36H0z" fill="url(#asus)" />
          <path d="M4 27L13.500 9.500h5L9 27zM12 27L21.500 9.500H30V27h-3.500V14l-9.500 13z" fill="#cfdcff" />
          <circle cx="24.500" cy="25" r="2.400" fill="#fff" />
        </Ic>
      </Task>
      <Task>
        <Ic w={35} h={36}>
          <defs>
            <linearGradient id="store" x1="0" y1="0" x2="1" y2="1">
              <stop stopColor="#0a6cbc" />
              <stop offset="1" stopColor="#26355a" />
            </linearGradient>
          </defs>
          <path d="M0 5h35v27a4 4 0 0 1-4 4H4a4 4 0 0 1-4-4z" fill="url(#store)" />
          <path d="M9 8V2h17.500v6" stroke="#26b3ef" strokeWidth="2" />
          <path d="M10 13h7v7h-7z" fill="#f25022" />
          <path d="M18 13h7v7h-7z" fill="#7fba00" />
          <path d="M10 21h7v7h-7z" fill="#00a4ef" />
          <path d="M18 21h7v7h-7z" fill="#ffb900" />
        </Ic>
      </Task>
      <Task>
        <Ic w={36} h={36}>
          <defs>
            <radialGradient id="insta" cx=".25" cy="1.050" r="1.100">
              <stop stopColor="#ffd45c" />
              <stop offset=".25" stopColor="#fb7a35" />
              <stop offset=".5" stopColor="#e0305f" />
              <stop offset=".75" stopColor="#b92f9d" />
              <stop offset="1" stopColor="#5a4fd0" />
            </radialGradient>
          </defs>
          <rect width="36" height="36" rx="6" fill="url(#insta)" />
          <rect x="6" y="6" width="24" height="24" rx="7" stroke="#fff" strokeWidth="2.300" />
          <circle cx="18" cy="18" r="6" stroke="#fff" strokeWidth="2.300" />
          <circle cx="25" cy="11" r="1.700" fill="#fff" />
        </Ic>
      </Task>
      <Task>
        <Ic w={36} h={36}>
          <defs>
            <linearGradient id="wps" x1=".2" y1="0" x2=".7" y2="1">
              <stop stopColor="#9a5dfa" />
              <stop offset=".5" stopColor="#dd27b4" />
              <stop offset="1" stopColor="#ff2d3d" />
            </linearGradient>
          </defs>
          <circle cx="18" cy="18" r="18" fill="url(#wps)" />
          <path d="M15.500 13H8.500l4.500 12.500 4.500-9 2.500 9L27.500 13H20" stroke="#fff" strokeWidth="3.200" strokeLinejoin="round" strokeLinecap="round" />
          <path d="M27.500 5l.8 2.200 2.200.8-2.200.8-.8 2.200-.8-2.200-2.200-.8 2.200-.8zM31 9l.6 1.400 1.400.6-1.400.6L31 13l-.6-1.400L29 11l1.400-.6z" fill="#fff" />
        </Ic>
      </Task>
      <Task running>
        <Ic w={36} h={36}>
          <path d="M18 9H33.600A18 18 0 0 0 2.400 9L10.200 22.500z" fill="#e33b2e" />
          <path d="M10.200 22.500L2.400 9A18 18 0 0 0 18 36L25.800 22.500z" fill="#24963f" />
          <path d="M25.800 22.500L18 36A18 18 0 0 0 33.600 9H18z" fill="#fcc31e" />
          <circle cx="18" cy="18" r="9" fill="#fff" />
          <circle cx="18" cy="18" r="7.200" fill="#2478ea" />
        </Ic>
      </Task>
      <Task running>
        <Ic w={36} h={36}>
          <path d="M18.500 0a17.500 17.500 0 1 1-8.300 33.200L0 36l2.900-9.600A17.500 17.500 0 0 1 18.500 0z" fill="#fff" />
          <path d="M18.500 3a14.500 14.500 0 1 1-7.300 27.200L4.500 32l1.900-6.300A14.500 14.500 0 0 1 18.500 3z" fill="#3dc557" />
          <FaPhone size={16} x={10.5} y={10} color="#fff" />
        </Ic>
        <div className="absolute -top-[7px] left-[16px] flex h-[24px] w-[31px] items-center justify-center rounded-full bg-[#0078d4] text-white">
          <Fit className="w-[18px] text-[16px] leading-none">27</Fit>
        </div>
      </Task>
      <Task running>
        <div className="flex size-[30px] items-center justify-center bg-[linear-gradient(135deg,#21e04b_0%,#a6e01b_30%,#f2e816_70%,#d9df14_100%)]">
          <div className="h-[22px] w-[22px] bg-black pl-[2px] pt-[2px]">
            <Fit className="h-[11px] w-[16px] text-[11.500px] font-bold leading-[11px] text-white">PC</Fit>
            <div className="mt-[5px] h-[1.500px] w-[8px] bg-white" />
          </div>
        </div>
      </Task>
      <Task running>
        <Ic w={36} h={27}>
          <rect width="36" height="27" rx="2" fill="#3a3b3d" />
          <path d="M0 2a2 2 0 0 1 2-2h11v5H0z" fill="#c9c9c9" />
          <path d="M12 0h12v5H12z" fill="#9a9a9a" />
          <path d="M24 0h10a2 2 0 0 1 2 2v3H24z" fill="#747474" />
          <path d="M5.500 9.500l6.500 6-6.500 6" stroke="#c9c9c9" strokeWidth="3.600" />
          <rect x="17" y="19.500" width="12" height="3.500" rx=".8" fill="#f2f2f2" />
        </Ic>
      </Task>
      <Task active>
        <ExcelLogo size={35} />
      </Task>
      <Task running>
        <Ic w={35} h={35}>
          <circle cx="17.500" cy="17.500" r="16.800" fill="#fff" stroke="#8a8a8a" strokeWidth="1" />
          <path d="M17.500 17.500L8.500 5.500l6-2z" fill="#fb6b0e" stroke="#8b3c00" strokeWidth=".6" />
          <path d="M17.500 17.500L20.500 7.500l4 1.500z" fill="#b6e82d" stroke="#567a00" strokeWidth=".6" />
          <path d="M17.500 17.500L4.500 20v-6.500z" fill="#fdb80c" stroke="#8b6200" strokeWidth=".6" />
          <path d="M17.500 17.500l11.500 10-3 3z" fill="#fb5a0e" stroke="#8b3c00" strokeWidth=".6" />
          <path d="M17.500 17.500l2 10h-4z" fill="#6eea8a" stroke="#2d8a40" strokeWidth=".6" />
          <path d="M10 22l7.500-4.500L22 16" stroke="#155" strokeWidth="1.800" />
        </Ic>
      </Task>
      <Ic w={16} h={10} className="ml-[35px] mt-[28px]">
        <path d="M1 9l7-7.500L15 9" stroke="#222" strokeWidth="1.900" />
      </Ic>
      <Ic w={25} h={20} className="ml-[28px] mt-[25px]">
        <path d="M5 16.500C-.5 16.500-.5 8.500 4.500 8 6 1 15 0 17.500 6c5 0 7 4 6 7l-5 3.500z" fill="#8f8f8f" stroke="#222" strokeWidth="1.300" />
        <path d="M4.500 8c4-1 6 1 9 4l-5 4.500H5C0 16.500 0 9 4.500 8z" fill="#d0d0d0" />
        <circle cx="17.500" cy="14.500" r="6.500" fill="#fff" />
        <path d="M13 14a4.500 4.500 0 0 1 8-2.500M22 15a4.500 4.500 0 0 1-8 2.500" stroke="#0f6cbd" strokeWidth="1.600" />
      </Ic>
      <Ic w={25} h={25} className="ml-[23px] mt-[22px]">
        <path d="M1 11A11 11 0 0 1 22 7M22.500 0v8h-8M1.500 24v-7h7M3 17.500A11 11 0 0 0 12 23" stroke="#222" strokeWidth="1.500" />
        <circle cx="18.500" cy="18" r="6" fill="#fc9a08" />
      </Ic>
      <div className="ml-[26px] flex w-[35px] shrink-0 flex-col items-center pt-[12px] text-[16px] leading-[22.500px] text-[#1a1a1a]">
        <Fit className="w-[35px]">ENG</Fit>
        <Fit className="w-[17px]">IN</Fit>
      </div>
      <Ic w={24} h={18} className="ml-[28px] mt-[25px]">
        <path d="M1 6.500C7-.5 17-.5 23 6.500M4.500 10c4-4.700 11-4.700 15 0M8 13.500c2.200-2.600 5.800-2.600 8 0" stroke="#222" strokeWidth="1.600" />
        <circle cx="12" cy="15.500" r="2.200" fill="#222" />
      </Ic>
      <Ic w={25} h={20} className="ml-[12px] mt-[24px]">
        <path d="M1 6.500h4L10.500 2v16L5 13.500H1z" stroke="#222" strokeWidth="1.500" strokeLinejoin="round" />
        <path d="M14 7c1.200 2 1.200 4 0 6M17 4c2.700 4 2.700 8 0 12M20.500 1c4 6 4 12 0 18" stroke="#222" strokeWidth="1.500" />
      </Ic>
      <Ic w={25} h={20} className="ml-[11px] mt-[22px]">
        <path d="M8 4.500h11a2 2 0 0 1 2 2v9a2 2 0 0 1-2 2H3a2 2 0 0 1-2-2v-6" stroke="#222" strokeWidth="1.600" />
        <path d="M22 8.500h2.500v5H22zM3.500 15.500v-5l7.500-3v8z" fill="#222" />
        <path d="M5.500 0L0 7.500h3L1.500 12 8 5H4.800z" fill="#222" />
      </Ic>
      <div className="ml-[24px] flex w-[92px] shrink-0 flex-col items-end pt-[10px] text-[16px] leading-[24px] text-[#1a1a1a]">
        <Fit className="w-[43px]">21:14</Fit>
        <Fit className="w-[92px]">30-11-2023</Fit>
      </div>
      <Ic w={20} h={24} className="ml-[14px] mt-[23px]">
        <path d="M10 0c5 0 8 3.500 8 8v6l2 4v1H0v-1l2-4V8c0-4.500 3-8 8-8zM6.500 20.500h7c-.5 3-6.500 3-7 0z" fill="#0046a0" />
      </Ic>
    </div>
  );
}

export default function App() {
  return (
    <div className="flex h-[1080px] w-[1920px] flex-col overflow-hidden bg-[linear-gradient(90deg,#ece8e1_0%,#ece7de_23%,#efe6df_35%,#eee9e2_52%,#efebe9_62%,#edecee_73%,#eeeaea_86%,#f1e6e3_93%,#eee9e6_100%)] font-['Open_Sans',sans-serif] text-[#262626]">
      <TitleBar />
      <TabRow />
      <div className="mx-[12px] w-[1896px] shrink-0 rounded-[10px] shadow-[0_2px_6px_rgba(0,0,0,0.2)]">
        <Ribbon />
        <MessageBar />
      </div>
      <FormulaBar />
      <div className="mt-[10px] flex h-[558px] shrink-0 bg-[linear-gradient(180deg,#efebe8,#e4e9ea)]">
        <Sheet />
        <VerticalScroll />
      </div>
      <SheetTabs />
      <StatusBar />
      <Taskbar />
    </div>
  );
}
